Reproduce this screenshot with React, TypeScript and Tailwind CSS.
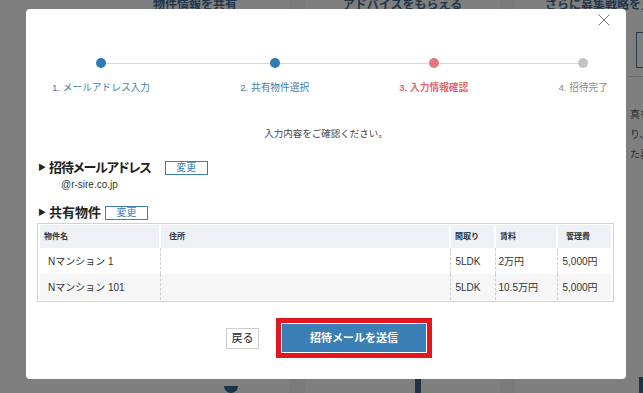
import React from 'react';

const steps = [
    { label: '1. メールアドレス入力', dot: 'bg-[#2f7ab3]', text: 'text-[#3d7fb0]' },
    { label: '2. 共有物件選択', dot: 'bg-[#2f7ab3]', text: 'text-[#3d7fb0]' },
    { label: '3. 入力情報確認', dot: 'bg-[#e07a7a]', text: 'text-[#e06b6b] font-bold' },
    { label: '4. 招待完了', dot: 'bg-[#c4c4c4]', text: 'text-[#8a8a8a]' },
];

const rows = [
    { name: 'Nマンション 1', layout: '5LDK', rent: '2万円', fee: '5,000円' },
    { name: 'Nマンション 101', layout: '5LDK', rent: '10.5万円', fee: '5,000円' },
];

const App: React.FC = () => {
    return (
        <div className="relative w-[643px] h-[393px] overflow-hidden bg-[#7f7f7f] font-['Liberation_Sans','Noto_Sans_CJK_JP',sans-serif]">
            {/* Page behind the overlay */}
            <div className="flex h-full">
                <div className="w-[100px] shrink-0" />
                <div className="w-[190px] shrink-0 flex flex-col">
                    <div className="h-[20px] text-center text-[12px] font-bold text-[#22354b] leading-[14px] -mt-[2px]">物件情報を共有</div>
                    <div className="flex-1" />
                    <div className="ml-[124px] w-[14px] h-[7px] rounded-b-full bg-[#1f3346]" />
                </div>
                <div className="w-[15px] shrink-0 bg-[#7a7a7a]" />
                <div className="w-[195px] shrink-0 flex flex-col">
                    <div className="h-[20px] text-center text-[12px] font-bold text-[#22354b] leading-[14px] -mt-[2px]">アドバイスをもらえる</div>
                    <div className="flex-1" />
                    <div className="ml-[110px] w-[6px] h-[14px] bg-[#1f3346]" />
                </div>
                <div className="w-[15px] shrink-0 bg-[#7a7a7a]" />
                <div className="flex-1 flex flex-col">
                    <div className="h-[20px] whitespace-nowrap pl-[30px] text-[12px] font-bold text-[#22354b] leading-[14px] -mt-[2px]">さらに募集戦略を見</div>
                    <div className="ml-[121px] mt-[14px] w-[14px] h-[36px] border border-[#2a3b4c]" />
                    <div className="ml-[113px] mt-[8px] h-px bg-[#6a6a6a]" />
                    <div className="ml-[115px] mt-[32px] flex flex-col gap-[8px] text-[10px] leading-[12px] text-[#2b2b2b] whitespace-nowrap">
                        <span>真を</span>
                        <span>り、</span>
                        <span>た募</span>
                    </div>
                    <div className="flex-1" />
                    <div className="ml-[124px] w-[12px] h-[16px] bg-[#1f3346]" />
                </div>
            </div>

            {/* Modal */}
            <div className="absolute left-[26px] top-[9px] w-[600px] h-[370px] bg-white rounded-[4px] flex flex-col">
                <button className="absolute top-[5px] right-[16px] w-[12px] h-[12px]">
                    <svg viewBox="0 0 12 12" className="w-[12px] h-[12px]" stroke="#777" strokeWidth="1" fill="none">
                        <path d="M0.5 0.5 L11.5 11.5 M11.5 0.5 L0.5 11.5" />
                    </svg>
                </button>

                {/* Stepper */}
                <div className="relative ml-[26px] mt-[49px] w-[556px] flex justify-between">
                    <div className="absolute left-[49px] right-[24px] top-[5px] h-px bg-[#d6d6d6]" />
                    {steps.map(s => (
                        <div key={s.label} className="relative flex flex-col items-center">
                            <div className={`w-[10px] h-[10px] rounded-full ${s.dot}`} />
                            <div className={`mt-[13px] text-[9.7px] leading-[14px] whitespace-nowrap ${s.text}`}>{s.label}</div>
                        </div>
                    ))}
                </div>

                <p className="mt-[32px] text-center text-[9.5px] leading-[14px] text-[#444]">入力内容をご確認ください。</p>

                {/* Invite address */}
                <div className="mt-[18px] ml-[12px] flex items-center h-[18px]">
                    <span className="text-[8px] text-[#222] mr-[3px]">▶</span>
                    <span className="text-[13px] font-bold text-[#222] tracking-[-1px] [font-feature-settings:'palt']">招待メールアドレス</span>
                    <button className="ml-[14px] w-[43px] h-[14px] border border-[#3d7fb0] text-[10px] leading-[12px] text-[#3d7fb0]">変更</button>
                </div>
                <p className="ml-[35px] mt-px text-[10px] leading-[14px] text-[#333]">@r-sire.co.jp</p>

                {/* Shared properties */}
                <div className="mt-[12px] ml-[12px] flex items-center h-[18px]">
                    <span className="text-[8px] text-[#222] mr-[3px]">▶</span>
                    <span className="text-[13px] font-bold text-[#222]">共有物件</span>
                    <button className="ml-[4px] w-[43px] h-[14px] border border-[#3d7fb0] text-[10px] leading-[12px] text-[#3d7fb0]">変更</button>
                </div>
                <div className="mt-px ml-[11px] w-[577px] border border-[#d2d2d2] px-[2px] py-px">
                    <table className="w-[571px] table-fixed border-collapse">
                        <colgroup>
                            <col className="w-[120px]" />
                            <col className="w-[290px]" />
                            <col className="w-[45px]" />
                            <col className="w-[62px]" />
                            <col className="w-[54px]" />
                        </colgroup>
                        <thead>
                            <tr className="h-[23px] bg-[#edf1f6] text-[8px] font-bold text-[#333] text-left">
                                <th className="pl-[4px] border-r-2 border-white">物件名</th>
                                <th className="pl-[8px] border-r-2 border-white">住所</th>
                                <th className="pl-[4px] border-r-2 border-white">間取り</th>
                                <th className="pl-[4px] border-r-2 border-white">賃料</th>
                                <th className="pl-[8px]">管理費</th>
                            </tr>
                        </thead>
                        <tbody>
                            {rows.map((r, i) => (
                                <tr key={r.name} className={`h-[26px] text-[10px] text-[#333] ${i % 2 === 1 ? 'bg-[#f6f6f6]' : 'bg-white'}`}>
                                    <td className="pl-[8px] border-r border-dashed border-[#cfcfcf] whitespace-nowrap">{r.name}</td>
                                    <td className="border-r border-dashed border-[#cfcfcf]" />
                                    <td className="pl-[5px] border-r border-dashed border-[#cfcfcf]">{r.layout}</td>
                                    <td className="pl-[3px] border-r border-dashed border-[#cfcfcf] whitespace-nowrap">{r.rent}</td>
                                    <td className="pl-[5px] whitespace-nowrap">{r.fee}</td>
                                </tr>
                            ))}
                        </tbody>
                    </table>
                </div>

                {/* Actions */}
                <div className="mt-[16px] flex items-center justify-center gap-[17px] pl-[6px]">
                    <button className="w-[33px] h-[21px] border border-[#cccccc] bg-white text-[11px] text-[#222]">戻る</button>
                    <div className="border-[5px] border-[#e3161f] p-px">
                        <button className="w-[144px] h-[28px] bg-[#3a80b6] text-white text-[11px] font-bold">招待メールを送信</button>
                    </div>
                </div>
            </div>
        </div>
    );
};

export default App;
